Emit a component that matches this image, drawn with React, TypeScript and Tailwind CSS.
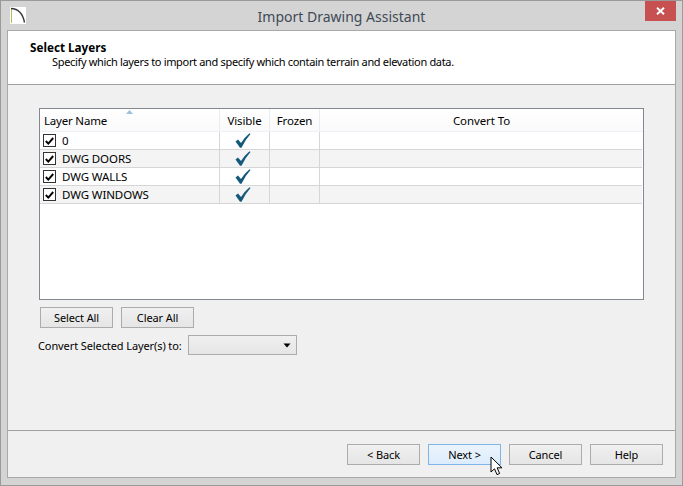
import React from "react";

const rows = ["0", "DWG DOORS", "DWG WALLS", "DWG WINDOWS"];

function Tick() {
  return (
    <svg width="16" height="15" viewBox="0 0 16 15" className="block">
      <path d="M0.5 8.5 L3 6.5 L6 10 Q9.5 4.5 14.5 0.3 L15.5 1 Q10 7 6.5 14.7 L5 14.7 Z" fill="#14587a" />
    </svg>
  );
}

function Check() {
  return (
    <span className="w-[13px] h-[13px] border border-[#333333] bg-white flex items-center justify-center shrink-0">
      <svg width="9" height="8" viewBox="0 0 9 8" className="block">
        <path d="M0.8 4 L3.3 6.6 L8.2 1" fill="none" stroke="#000000" strokeWidth="1.9" />
      </svg>
    </span>
  );
}

function Btn({ label, active }: { label: string; active?: boolean }) {
  return (
    <button
      className={
        active
          ? "w-[73px] h-[21px] border border-[#7eb4ea] bg-gradient-to-b from-[#ecf4fc] to-[#dcecfc] text-[11px] tracking-[-0.1px] leading-none text-black flex items-center justify-center"
          : "w-[73px] h-[21px] border border-[#acacac] bg-gradient-to-b from-[#f0f0f0] to-[#e5e5e5] text-[11px] tracking-[-0.1px] leading-none text-black flex items-center justify-center"
      }
    >
      {label}
    </button>
  );
}

export default function App() {
  return (
    <div className="relative w-[683px] h-[486px] bg-[#d4d4d4] border border-[#9a9a9a] flex flex-col overflow-hidden font-['Noto_Sans','Open_Sans',sans-serif] text-[11px] text-black">
      <div className="h-[29px] shrink-0 relative flex items-center justify-center pt-[1px]">
        <svg width="16" height="17" viewBox="0 0 16 17" className="absolute left-[9px] top-[6px]">
          <rect width="16" height="17" fill="#ffffff" />
          <rect x="1" y="1" width="1" height="15" fill="#a6c65a" />
          <path d="M1 1.5 Q12 2 14.5 15.5" fill="none" stroke="#3a3a3a" strokeWidth="1.4" />
        </svg>
        <span className="text-[14px] text-[#3f4a56]">Import Drawing Assistant</span>
        <div className="absolute right-[6px] top-0 w-[31px] h-[20px] bg-[#c75050] flex items-center justify-center">
          <svg width="9" height="8" viewBox="0 0 9 8">
            <path d="M1 0.8 L8 7.2 M8 0.8 L1 7.2" stroke="#ffffff" strokeWidth="1.9" />
          </svg>
        </div>
      </div>

      <div className="mx-[6px] mb-[7px] flex-1 border border-[#a8a8a8] bg-[#f0f0f0] flex flex-col min-h-0">
        <div className="h-[54px] bg-white border-b border-[#a0a0a0] shrink-0 pl-[22px] pt-[9px]">
          <div className="font-bold text-[11.7px] leading-[14px]">Select Layers</div>
          <div className="pl-[22px] leading-[14px] pt-[1px] tracking-[-0.33px] whitespace-nowrap">Specify which layers to import and specify which contain terrain and elevation data.</div>
        </div>

        <div className="flex-1 flex flex-col pl-[31px] pr-[31px] pt-[23px] min-h-0">
          <div className="h-[192px] w-[605px] shrink-0 border border-[#828790] bg-white flex flex-col text-[11.5px] tracking-[-0.1px]">
            <div className="relative h-[23px] shrink-0 flex bg-gradient-to-b from-white to-[#fafafa] border-b border-[#eef1f6] leading-none">
              <div className="w-[180px] flex items-center pl-[4px] pt-[1px] border-r border-[#e8edf3] tracking-[-0.2px]">Layer Name</div>
              <svg width="7" height="4" viewBox="0 0 7 4" className="absolute left-[86px] top-[1px]">
                <path d="M0 4 L3.5 0 L7 4 Z" fill="#9fc0d8" />
              </svg>
              <div className="w-[50px] flex items-center justify-center pt-[1px] border-r border-[#e8edf3]">Visible</div>
              <div className="w-[50px] flex items-center justify-center pt-[1px] border-r border-[#e8edf3]">Frozen</div>
              <div className="flex-1 flex items-center justify-center pt-[1px]">Convert To</div>
            </div>
            {rows.map((r, i) => (
              <div key={r} className={i % 2 ? "h-[18px] flex bg-[#f4f4f4] border-b border-[#d6d6d6] mr-[1px]" : "h-[18px] flex bg-white border-b border-[#d6d6d6] mr-[1px]"}>
                <div className="w-[180px] flex items-center gap-[6px] pl-[3px] border-r border-[#d6d6d6]">
                  <Check />
                  <span className="leading-none">{r}</span>
                </div>
                <div className="w-[50px] flex items-center justify-center pr-[3px] border-r border-[#d6d6d6]">
                  <Tick />
                </div>
                <div className="w-[50px] border-r border-[#d6d6d6]" />
                <div className="flex-1" />
              </div>
            ))}
          </div>

          <div className="flex gap-[8px] pl-[1px] pt-[7px]">
            <Btn label="Select All" />
            <Btn label="Clear All" />
          </div>

          <div className="flex items-center pt-[7px] -ml-[1px]">
            <span className="w-[150px] leading-none tracking-[-0.1px] whitespace-nowrap">Convert Selected Layer(s) to:</span>
            <div className="w-[109px] h-[20px] border border-[#acacac] bg-gradient-to-b from-[#f0f0f0] to-[#e5e5e5] flex items-center justify-end pr-[5px]">
              <svg width="8" height="5" viewBox="0 0 8 5"><path d="M0.5 0.5 L7.5 0.5 L4 4.5 Z" fill="#000000" /></svg>
            </div>
          </div>
        </div>

        <div className="h-[47px] shrink-0 border-t border-[#a0a0a0] flex justify-end gap-[8px] pt-[13px] pr-[12px]">
          <Btn label="< Back" />
          <Btn label="Next >" active />
          <Btn label="Cancel" />
          <Btn label="Help" />
        </div>
      </div>

      <svg width="13" height="20" viewBox="0 0 13 20" className="absolute left-[489px] top-[455px]">
        <path d="M1 1 L1 16 L4.5 12.8 L7 18.6 L9.6 17.5 L7.2 11.8 L12 11.8 Z" fill="#ffffff" stroke="#000000" strokeWidth="1" strokeLinejoin="round" />
      </svg>
    </div>
  );
}
